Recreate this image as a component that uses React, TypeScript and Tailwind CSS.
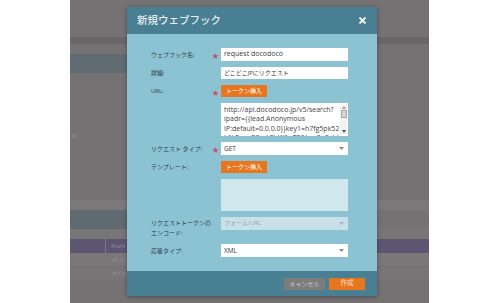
import React from 'react';

const font = { fontFamily: '"Open Sans", "Noto Sans CJK JP", sans-serif' };

function Star() {
  return <span className="text-[7px] leading-none text-[#c9506a]">★</span>;
}

function Arrow({ color = '#8a8a8a' }: { color?: string }) {
  return (
    <svg width="5" height="3" viewBox="0 0 5 3" className="shrink-0">
      <path d="M0 0 L5 0 L2.5 3 Z" fill={color} />
    </svg>
  );
}

function Row({ label, star, children, top }: { label: React.ReactNode; star?: boolean; children: React.ReactNode; top?: boolean }) {
  return (
    <div className={`grid grid-cols-[61px_9px_127px] ${top ? 'items-start' : 'items-center'}`}>
      <div className={`text-[6px] text-[#2f4047] ${top ? 'pt-[1px] leading-[10px]' : 'leading-[8px]'}`}>{label}</div>
      <div className="flex items-center pt-[2px]">{star && <Star />}</div>
      <div>{children}</div>
    </div>
  );
}

function TokenButton() {
  return (
    <button className="flex h-[12px] w-[46px] items-center justify-center bg-[#e8761f] text-[6px] leading-none text-white">
      トークン挿入
    </button>
  );
}

export default function App() {
  return (
    <div className="flex h-[303px] w-[500px] overflow-hidden bg-white" style={font}>
      <div className="w-[70px] shrink-0 bg-white" />

      {/* dimmed page behind the dialog */}
      <div className="relative flex w-[359px] shrink-0 flex-col overflow-hidden bg-[#757274]">
        <div className="h-[37px]" />
        <div className="h-[7px] bg-[#6a6769]" />
        <div className="h-[10px]" />
        <div className="h-[19px] w-[110px] bg-[#606b72]" />
        <div className="flex h-[127px] items-center">
          <span className="ml-[1px] text-[6px] text-[#939092]">RL</span>
        </div>
        <div className="h-[10px] bg-[#7b787a]" />
        <div className="h-[19px] w-[110px] bg-[#5f6a71]" />
        <div className="h-[10px] bg-[#787577]" />
        <div className="flex h-[14px] items-center bg-[#5c5670]">
          <div className="h-full w-[36px] border-r border-[#7a7590]" />
          <span className="ml-[5px] text-[6px] text-[#8f8aa6]">Mark</span>
        </div>
        <div className="flex h-[14px] items-center border-b border-[#737072] bg-[#7a7779]">
          <span className="ml-[42px] text-[6px] text-[#908d8f]">dc_o</span>
        </div>
        <div className="flex h-[13px] items-center bg-[#787577]">
          <span className="ml-[42px] text-[6px] text-[#908d8f]">dcOr</span>
        </div>
        <div className="flex-1" />

        {/* dialog */}
        <div className="absolute left-[57px] top-[7px] flex h-[289px] w-[250px] flex-col shadow-[0_1px_4px_rgba(0,0,0,0.35)]">
          <div className="flex h-[27px] items-center justify-between bg-[#497f92] pl-[10px] pr-[11px]">
            <span className="text-[10.5px] font-medium leading-none text-[#e6eef1]">新規ウェブフック</span>
            <svg width="7" height="7" viewBox="0 0 8 8">
              <path d="M1.2 1.2 L6.8 6.8 M6.8 1.2 L1.2 6.8" stroke="#ffffff" strokeWidth="2.1" strokeLinecap="round" />
            </svg>
          </div>

          <div className="flex flex-1 flex-col gap-[6px] bg-[#8bc3d3] pl-[24px] pt-[14px]">
            <Row label="ウェブフック名:" star>
              <div className="flex h-[13px] items-center bg-white pl-[3px] text-[7px] text-[#3a3a3a]">request docodoco</div>
            </Row>
            <Row label="詳細:">
              <div className="flex h-[12px] items-center bg-white pl-[3px] text-[6px] text-[#3a3a3a]">どこどこJPにリクエスト</div>
            </Row>
            <Row label="URL:" star>
              <TokenButton />
            </Row>
            <Row label="">
              <div className="relative h-[33px] overflow-hidden bg-white pl-[3px] pt-[2px] text-[7px] leading-[9.3px] text-[#444]">
                <div className="whitespace-nowrap">http://api.docodoco.jp/v5/search?</div>
                <div className="whitespace-nowrap">ipadr={'{{'}lead.Anonymous</div>
                <div className="whitespace-nowrap">IP:default=0.0.0.0{'}}'}key1=h7fg5pk52</div>
                <div className="whitespace-nowrap">k1k2=xyG8mLSbW1qT2&amp;key2=8aJd</div>
                <div className="absolute bottom-[2px] right-[1px] top-[2px] flex w-[7px] flex-col items-center bg-[#f2f2f2]">
                  <svg width="4" height="3" viewBox="0 0 4 3" className="mt-[1px]">
                    <path d="M0 3 L4 3 L2 0 Z" fill="#a0a0a0" />
                  </svg>
                  <div className="mt-[1px] h-[8px] w-[6px] border border-[#a8a8a8] bg-[#d4d4d4]" />
                  <div className="flex-1" />
                  <svg width="4" height="3" viewBox="0 0 4 3" className="mb-[1px]">
                    <path d="M0 0 L4 0 L2 3 Z" fill="#505050" />
                  </svg>
                </div>
              </div>
            </Row>
            <Row label="リクエスト タイプ:" star>
              <div className="flex h-[13px] items-center justify-between bg-white pl-[3px] pr-[4px] text-[6.5px] text-[#3a3a3a]">
                GET
                <Arrow />
              </div>
            </Row>
            <Row label="テンプレート:">
              <TokenButton />
            </Row>
            <Row label="">
              <div className="h-[32px] bg-[#d1e7ee]" />
            </Row>
            <Row
              top
              label={
                <>
                  <div>リクエストトークンの</div>
                  <div>エンコード:</div>
                </>
              }
            >
              <div className="flex h-[13px] items-center justify-between bg-[#c8e1e9] pl-[3px] pr-[4px] text-[6px] text-[#8fa9b3]">
                フォーム/URL
                <Arrow color="#9fb5bd" />
              </div>
            </Row>
            <Row label="応答タイプ:">
              <div className="flex h-[13px] items-center justify-between bg-white pl-[3px] pr-[4px] text-[6.5px] text-[#3a3a3a]">
                XML
                <Arrow />
              </div>
            </Row>
          </div>

          <div className="flex h-[25px] items-center justify-end gap-[4px] bg-[#497f92] pr-[12px]">
            <button className="flex h-[12px] w-[41px] items-center justify-center bg-[#7c7c7c] text-[6px] leading-none text-[#c9c9c9]">
              キャンセル
            </button>
            <button className="flex h-[12px] w-[36px] items-center justify-center bg-[#e8761f] text-[6.5px] leading-none text-[#fbe3cf]">
              作成
            </button>
          </div>
        </div>
      </div>

      <div className="flex-1 bg-white" />
    </div>
  );
}
